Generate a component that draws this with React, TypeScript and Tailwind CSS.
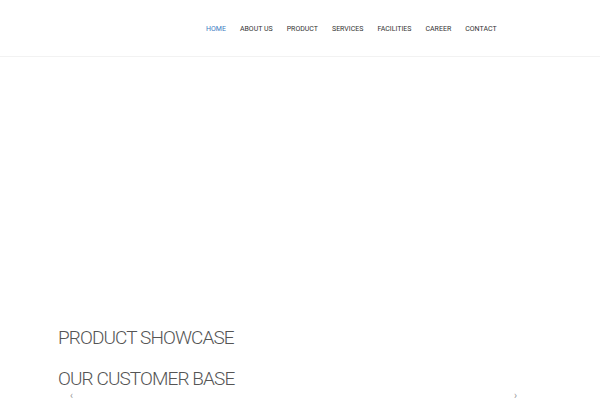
export default function App() {
  const items = ['HOME', 'ABOUT US', 'PRODUCT', 'SERVICES', 'FACILITIES', 'CAREER', 'CONTACT']
  return (
    <div className="w-[600px] h-[400px] overflow-hidden bg-white" style={{ fontFamily: 'Roboto, "Open Sans", sans-serif' }}>
      <header className="h-[57px] border-b border-[#f2f2f2] flex items-center">
        <nav className="ml-[206px] flex gap-[14px] text-[7px] pt-[3px]">
          {items.map((item, i) => (
            <a key={item} className={i === 0 ? 'text-[#3b7bbf]' : 'text-[#333]'}>
              {item}
            </a>
          ))}
        </nav>
      </header>
      <div className="h-[271px]" />
      <section className="px-[58px]">
        <h2 className="text-[19px] font-light text-[#555] leading-none tracking-[-0.9px]">PRODUCT SHOWCASE</h2>
        <h2 className="mt-[22px] text-[19px] font-light text-[#555] leading-none tracking-[-0.9px]">OUR CUSTOMER BASE</h2>
        <div className="flex justify-between pl-[12px] pr-[25px] mt-[3px] text-[10px] text-[#999] leading-none">
          <span>‹</span>
          <span>›</span>
        </div>
      </section>
    </div>
  )
}
